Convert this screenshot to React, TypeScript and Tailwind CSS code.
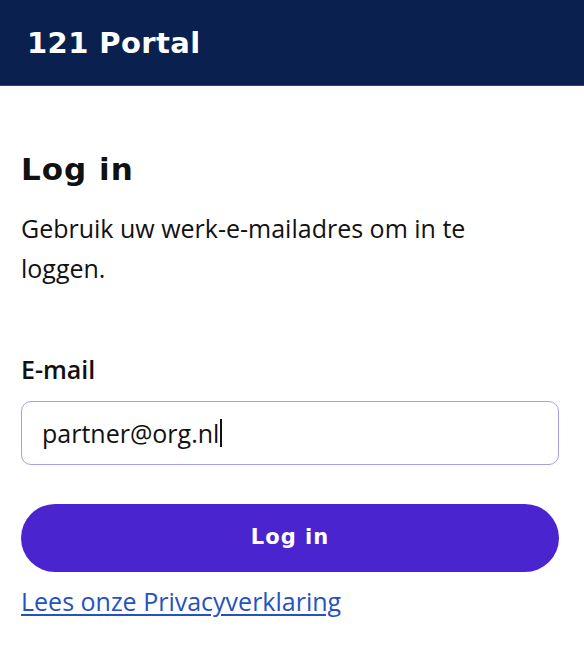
import React from "react";

export default function App() {
  return (
    <div className="min-h-screen w-full bg-white">
      <header className="flex h-[86px] items-center border-b border-[#4a25cf] bg-[#0a2150] px-[27px]">
        <h1 className="font-['DejaVu_Sans',sans-serif] text-[29px] font-bold leading-[36px] tracking-[0.4px] text-white">
          121 Portal
        </h1>
      </header>
      <main className="pl-[21px] pr-[25px] pt-[65px] font-['Open_Sans',sans-serif] text-[#111]">
        <h2 className="font-['DejaVu_Sans',sans-serif] text-[31px] font-bold leading-[36px] tracking-[1px] text-[#111]">
          Log in
        </h2>
        <p className="mt-[21px] max-w-[500px] text-[25px] leading-[40px] text-[#111]">
          Gebruik uw werk-e-mailadres om in te loggen.
        </p>
        <label className="mt-[64px] block text-[25px] font-semibold leading-[34px] text-[#111]">
          E-mail
        </label>
        <div className="mt-[15px] flex h-[64px] items-center rounded-[10px] border border-[#a99cf0] pl-[20px] pr-[20px]">
          <span className="text-[25px] leading-[34px] text-[#111]">partner@org.nl</span>
          <span className="ml-[1px] h-[28px] w-[2px] bg-[#111]" />
        </div>
        <button className="mt-[39px] flex h-[68px] w-full items-center justify-center rounded-full bg-[#4a25cf] font-['DejaVu_Sans',sans-serif] text-[21px] font-bold tracking-[1px] text-white">
          Log in
        </button>
        <a
          href="#"
          className="mt-[12px] inline-block text-[25px] leading-[34px] text-[#2452c0] underline decoration-[1.5px] underline-offset-[3px]"
        >
          Lees onze Privacyverklaring
        </a>
      </main>
    </div>
  );
}
